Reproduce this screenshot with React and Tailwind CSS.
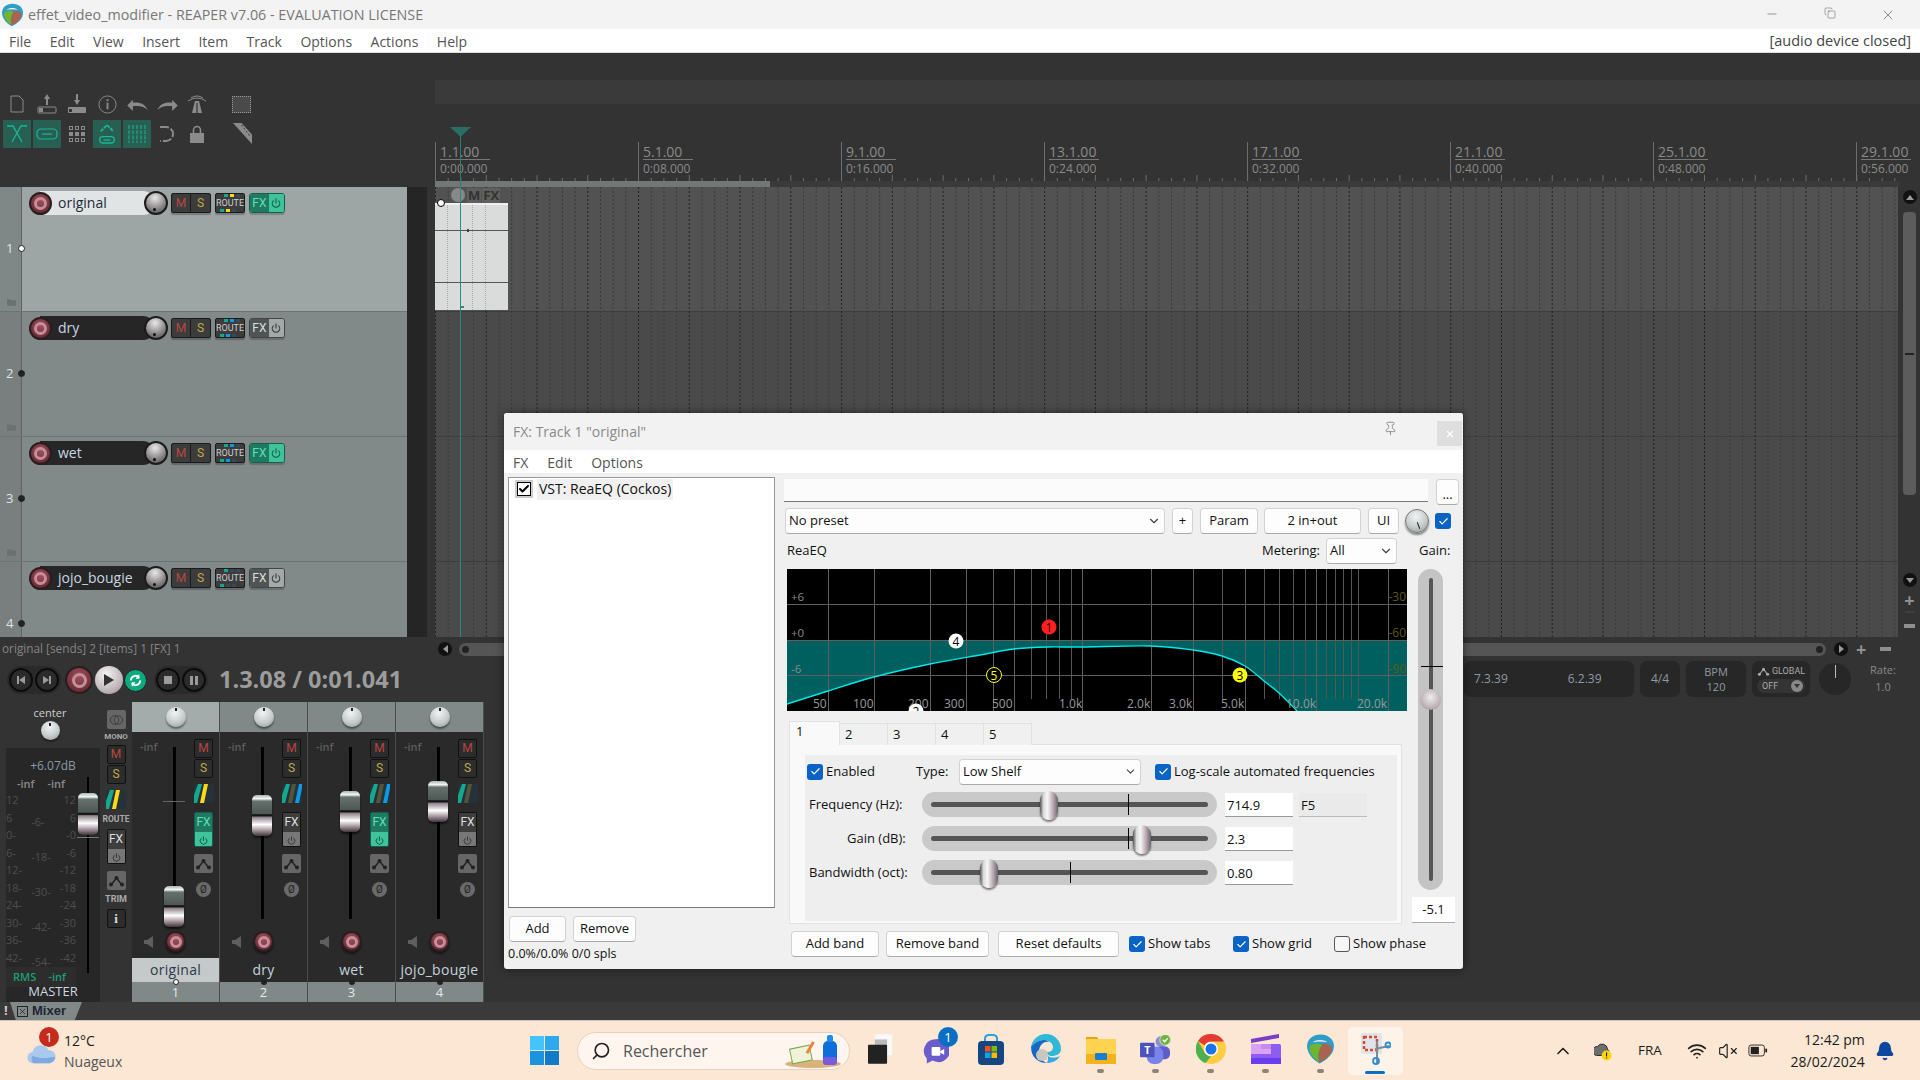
import React from 'react';
import { Minus, Copy, X, Power, Pin, ChevronDown, ChevronUp, Search, Bell, Wifi, VolumeX, Check } from 'lucide-react';

const rec = "rounded-full bg-[radial-gradient(circle_at_50%_35%,#a2505e,#6e2f3b_70%,#3a1a20)] border-2 border-[#2a1c1f] flex items-center justify-center";
const knob = "rounded-full bg-[radial-gradient(circle_at_45%_30%,#f2f4f4,#c5cbcb_55%,#8d9393)] shadow-[0_2px_2px_rgba(0,0,0,0.45)]";
const capV = "bg-[linear-gradient(#aab4b0_0,#f4f7f5_9%,#66716e_15%,#4d5855_46%,#151515_48%,#151515_51%,#8d8288_54%,#ffffff_72%,#b5a6ad_84%,#40353a_100%)]";
const capH = "bg-[linear-gradient(90deg,#555_0,#ddd_20%,#f5f5f5_42%,#bfaeb7_70%,#666_100%)]";

function RecordBtn({ size = 'w-[23px] h-[23px]', inner = 'w-[13px] h-[13px]', className = '' }) {
  return (
    <div className={`${rec} ${size} ${className} shrink-0`}>
      <div className={`${inner} rounded-full border-[3px] border-[#c48f99]`} />
    </div>
  );
}

function Env({ className = 'w-[15px] h-[12px]', color = '#222' }) {
  return (
    <svg viewBox="0 0 15 12" className={className}>
      <polyline points="2,10 7.5,3 13,10" fill="none" stroke={color} strokeWidth="1.5" />
      <circle cx="2" cy="9.5" r="2" fill={color} /><circle cx="7.5" cy="3" r="2" fill={color} /><circle cx="13" cy="9.5" r="2" fill={color} />
    </svg>
  );
}

function Stripes({ colors }) {
  return (
    <svg viewBox="0 0 20 19" className="w-[20px] h-[19px] block">
      <rect width="20" height="19" rx="2" fill="#26323a" />
      <polygon points="0,19 0,11 4,0 8,0 3,19" fill={colors[0]} />
      <polygon points="6,19 10,0 14,0 10,19" fill={colors[1]} />
      <polygon points="13,19 17,0 20,0 20,4 17,19" fill={colors[2]} />
    </svg>
  );
}

function TrackHeader({ num, name, selected, fx, stripe }) {
  return (
    <div className={`h-[125px] shrink-0 flex border-b border-[#6c7473] ${selected ? 'bg-[#9ea5a5]' : 'bg-[#818a89]'}`}>
      <div className={`w-[22px] shrink-0 relative border-r border-[#5d6564] flex items-center text-[13px] text-[#dfe3e3] pl-[6px] ${selected ? 'bg-[#7f8887]' : 'bg-[#787f7e]'}`}>
        {num}
        <div className={`absolute right-[-4px] top-[58px] w-[7px] h-[7px] rounded-full border ${num === 1 ? 'bg-white border-[#222]' : 'bg-[#222] border-[#222]'}`} />
        <svg viewBox="0 0 10 7" className="absolute left-[7px] bottom-[5px] w-[9px] h-[7px]"><path d="M0 0h4l1 1h5v6H0z" fill="#6a7271" /></svg>
      </div>
      <div className="flex items-start pt-[4px] pl-[7px]">
        <RecordBtn className="z-10 mt-[1px]" />
        <div className={`-ml-[12px] w-[115px] h-[24px] rounded-r-full pl-[18px] text-[14px] leading-[23px] ${selected ? 'bg-[#e1e4e4] text-[#1d2b3a]' : 'bg-[#262626] text-[#c9d6e3]'}`}>{name}</div>
        <div className="-ml-[11px] w-[24px] h-[24px] z-10 relative rounded-full border-2 border-[#1c1c1c] bg-[radial-gradient(circle_at_45%_25%,#e8e8e8,#8f8a8d_55%,#454545)]">
          <div className="absolute left-[7px] bottom-[2px] w-[3px] h-[3px] rounded-full bg-[#111]" />
        </div>
        <div className="ml-[3px] mt-[2px] flex h-[20px] rounded-[2px] border border-[#1b1b1b] bg-[#3c3c3c] text-[12px] leading-[18px] font-['Roboto'] shadow-[0_2px_1px_rgba(0,0,0,0.25)]">
          <span className="w-[19px] text-center text-[#b8473f] border-r border-[#1b1b1b]">M</span>
          <span className="w-[19px] text-center text-[#c2a84a]">S</span>
        </div>
        <div className="ml-[4px] mt-[2px] relative w-[30px] h-[20px] rounded-[2px] border border-[#1b1b1b] bg-[#3c3c3c] text-[9px] leading-[18px] text-center font-['Roboto'] text-[#ccc] shadow-[0_2px_1px_rgba(0,0,0,0.25)]">
          ROUTE
          <div className="absolute top-0 left-[8px] flex gap-[2px]"><i className="w-[4px] h-[3px] bg-[#14a88f]" /><i className={`w-[4px] h-[3px] ${stripe}`} /><i className="w-[4px] h-[3px] bg-[#3a4a55]" /></div>
          <div className="absolute bottom-0 left-[4px] flex gap-[2px]"><i className="w-[4px] h-[3px] bg-[#14a88f]" /><i className={`w-[4px] h-[3px] ${stripe}`} /><i className="w-[4px] h-[3px] bg-[#3a4a55]" /></div>
        </div>
        <div className={`ml-[4px] mt-[2px] flex w-[36px] h-[20px] rounded-[3px] border overflow-hidden shadow-[0_2px_1px_rgba(0,0,0,0.2)] ${fx ? 'border-[#14604c]' : 'border-[#444]'}`}>
          <span className={`w-[20px] text-center text-[12px] leading-[18px] font-['Roboto'] ${fx ? 'bg-[#1f7a61] text-[#5be0b5]' : 'bg-[#4f5554] text-[#ddd]'}`}>FX</span>
          <span className={`w-[16px] flex items-center justify-center ${fx ? 'bg-[#3fc39a] text-[#0f5a46]' : 'bg-[#a3a8a8] text-[#333]'}`}><Power size={10} strokeWidth={2.5} /></span>
        </div>
      </div>
    </div>
  );
}

function ToolBtn({ on, children }) {
  return <div className={`w-[28px] h-[28px] mx-[1px] flex items-center justify-center ${on ? 'bg-[#285f53]' : ''}`}>{children}</div>;
}

function Toolbar() {
  const g = '#8b8b8b', t = '#1fb596';
  return (
    <div className="h-[134px] pt-[36px] pl-[2px]">
      <div className="flex h-[30px] items-center">
        <ToolBtn><svg viewBox="0 0 14 18" className="w-[14px] h-[18px]"><path d="M1 1h8l4 4v12H1z" fill="none" stroke={g} /></svg></ToolBtn>
        <ToolBtn><svg viewBox="0 0 20 20" className="w-[20px] h-[20px]"><path d="M10 0l3 5h-2v6H9V5H7z" fill={g} /><rect x="1" y="13" width="18" height="6" rx="1" fill="none" stroke={g} /><rect x="2" y="14" width="4" height="4" fill={g} /></svg></ToolBtn>
        <ToolBtn><svg viewBox="0 0 20 20" className="w-[20px] h-[20px]"><path d="M10 11l3-5h-2V0H9v6H7z" fill={g} /><rect x="1" y="13" width="18" height="6" rx="1" fill={g} /><rect x="2" y="15" width="3" height="3" fill="#333" /></svg></ToolBtn>
        <ToolBtn><svg viewBox="0 0 20 20" className="w-[19px] h-[19px]"><circle cx="10" cy="10" r="9" fill="none" stroke={g} /><rect x="9" y="8" width="2" height="7" fill={g} /><rect x="9" y="4.5" width="2" height="2" fill={g} /></svg></ToolBtn>
        <ToolBtn><svg viewBox="0 0 22 14" className="w-[21px] h-[13px]"><path d="M0 8l6-6v3c7-1 13 1 16 8-4-4-9-5-16-4v5z" fill={g} /></svg></ToolBtn>
        <ToolBtn><svg viewBox="0 0 22 14" className="w-[21px] h-[13px]"><path d="M22 8l-6-6v3C9 4 3 6 0 13c4-4 9-5 16-4v5z" fill={g} /></svg></ToolBtn>
        <ToolBtn><svg viewBox="0 0 20 20" className="w-[20px] h-[20px]"><path d="M8 7h4l3 12H5z" fill={g} /><path d="M1 7q9-6 18 0" fill="none" stroke={g} /><path d="M4 4q6-4 12 0" fill="none" stroke={g} /><rect x="9.4" y="9" width="1.2" height="10" fill="#333" /></svg></ToolBtn>
        <div className="ml-[20px] w-[19px] h-[17px] border border-dotted border-[#999] bg-[#4a4a4a]" />
      </div>
      <div className="flex h-[30px] items-center">
        <ToolBtn on><svg viewBox="0 0 20 20" className="w-[20px] h-[20px]"><path d="M0 2h6l9 16M20 2h-6L5 18" fill="none" stroke={t} strokeWidth="1.3" /></svg></ToolBtn>
        <ToolBtn on><svg viewBox="0 0 22 12" className="w-[22px] h-[12px]"><rect x="1" y="1" width="20" height="10" rx="4" fill="none" stroke={t} strokeWidth="1.2" /><rect x="6" y="5.5" width="10" height="1.2" fill={t} /></svg></ToolBtn>
        <ToolBtn><div className="grid grid-cols-3 gap-[2px]">{Array.from({ length: 9 }).map((_, i) => <i key={i} className={`w-[4px] h-[4px] border border-[#8b8b8b] ${i > 2 && i < 6 ? 'bg-[#8b8b8b]' : ''}`} />)}</div></ToolBtn>
        <ToolBtn on><svg viewBox="0 0 20 24" className="w-[18px] h-[22px]"><path d="M3 9l7-7 7 7" fill="none" stroke={t} strokeWidth="2" strokeDasharray="4 1" /><rect x="2" y="15" width="16" height="7" rx="3" fill="none" stroke={t} strokeWidth="1.4" /><rect x="6" y="18" width="8" height="1.4" fill={t} /></svg></ToolBtn>
        <ToolBtn on><svg viewBox="0 0 18 18" className="w-[18px] h-[18px]">{[1, 5, 9, 13, 17].map(x => <line key={x} x1={x} x2={x} y1="0" y2="18" stroke={t} strokeDasharray="4 1.2" />)}</svg></ToolBtn>
        <ToolBtn><svg viewBox="0 0 16 18" className="w-[16px] h-[18px]"><path d="M1 2h6a7 7 0 0 1 0 14H1" fill="none" stroke={g} strokeWidth="2" strokeDasharray="9 2" /></svg></ToolBtn>
        <ToolBtn><svg viewBox="0 0 14 18" className="w-[14px] h-[18px]"><path d="M3.5 8V5a3.5 3.5 0 0 1 7 0v3" fill="none" stroke={g} strokeWidth="1.6" /><rect x="0" y="8" width="14" height="10" fill={g} /></svg></ToolBtn>
        <div className="ml-[21px] w-[19px] h-[22px]"><svg viewBox="0 0 20 22"><path d="M0 0h9l11 12v10z" fill={g} /><path d="M9 2l9 12" stroke="#333" strokeDasharray="2 2" /></svg></div>
      </div>
    </div>
  );
}

function Ruler() {
  const labels = [['1.1.00', '0:00.000'], ['5.1.00', '0:08.000'], ['9.1.00', '0:16.000'], ['13.1.00', '0:24.000'], ['17.1.00', '0:32.000'], ['21.1.00', '0:40.000'], ['25.1.00', '0:48.000'], ['29.1.00', '0:56.000']];
  return (
    <div className="h-[83px] relative pt-[38px] overflow-hidden">
      <div className="flex text-[#8a8a8a]">
        {labels.map(l => (
          <div key={l[0]} className="w-[203px] shrink-0 h-[39px] border-l border-[#6d6d6d] pl-[4px] pt-[1px]">
            <div className="w-[50px] text-[14px] leading-[17px] border-b border-[#777] h-[17px]">{l[0]}</div>
            <div className="text-[12px] leading-[17px]">{l[1]}</div>
          </div>
        ))}
      </div>
      <div className="absolute left-[0px] bottom-0 h-[6px] w-[335px] bg-[#717876]" />
      <div className="absolute left-[335px] bottom-0 h-[6px] w-[1130px] bg-[#3a3a3a]" />
      <svg className="absolute left-0 bottom-[6px] h-[6px] w-[1465px]">
        {Array.from({ length: 116 }).map((_, i) => <line key={i} x1={i * 12.69 + 0.5} x2={i * 12.69 + 0.5} y1={i % 4 === 0 ? 0 : 3} y2="6" stroke="#6d6d6d" />)}
      </svg>
      <svg viewBox="0 0 21 10" className="absolute left-[15px] top-[23px] w-[21px] h-[10px]"><path d="M0 0h21L10.5 10z" fill="#2a6d64" /></svg>
      <div className="absolute left-[25px] top-[33px] bottom-0 w-[1px] bg-[#2f7d72]" />
    </div>
  );
}

function Arrange() {
  const lines = Array.from({ length: 116 });
  return (
    <div className="relative w-[1463px] h-[450px] overflow-hidden">
      {[true, false, false, false].map((s, i) => <div key={i} className={`h-[125px] border-b border-[#3d3d3d] ${s ? 'bg-[#525252]' : 'bg-[#4a4a4a]'}`} />)}
      <svg className="absolute inset-0 w-[1463px] h-[450px]">
        {lines.map((_, i) => <line key={i} x1={i * 12.69 + 0.5} x2={i * 12.69 + 0.5} y1="0" y2="450" stroke={i % 4 === 0 ? '#222' : '#3a3a3a'} strokeDasharray="2 2" />)}
      </svg>
      <div className="absolute left-0 top-0 flex items-start pl-[16px] pt-[1px] text-[13px] leading-[15px] font-bold text-[#333] gap-[1px]">
        <i className="w-[14px] h-[14px] rounded-full bg-[#888] mr-[1px]" />
        <span className="bg-[#5f5f5f] px-[1px]">M</span><span className="bg-[#5f5f5f] px-[1px]">FX</span>
      </div>
      <div className="absolute left-0 top-[16px] w-[73px] h-[107px] bg-[#d9dcdb] border-t-[2px] border-[#f0f0f0]">
        <div className="absolute left-0 right-0 top-[25px] h-[1px] bg-[#555]" />
        <div className="absolute left-[32px] top-[24px] w-[2px] h-[3px] bg-[#444]" />
        <div className="absolute left-0 right-0 top-[77px] h-[1px] bg-[#555]" />
        {[12, 37, 50].map(x => <div key={x} className="absolute top-0 bottom-0 border-l border-dotted border-[#aaa]" style={{ left: x }} />)}
      </div>
      <div className="absolute left-[2px] top-[12px] w-[8px] h-[8px] rounded-full bg-white border-[1.5px] border-black" />
      <div className="absolute left-[25px] top-0 bottom-0 w-[1px] bg-[#2f8c7f]" />
      <div className="absolute left-[25px] top-[119px] w-[4px] h-[2px] bg-[#2f8c7f]" />
    </div>
  );
}

function VScroll() {
  return (
    <div className="w-[21px] flex flex-col items-center pt-[3px] pl-[2px]">
      <div className="w-[14px] h-[14px] rounded-full bg-[#111] flex items-center justify-center"><div className="w-0 h-0 border-x-[4px] border-x-transparent border-b-[5px] border-b-[#999]" /></div>
      <div className="mt-[8px] w-[13px] h-[283px] rounded-[4px] bg-[#5c5c5c] flex items-center justify-center"><i className="w-[9px] h-[2px] bg-[#222]" /></div>
      <div className="mt-[78px] w-[14px] h-[14px] rounded-full bg-[#111] flex items-center justify-center"><div className="w-0 h-0 border-x-[4px] border-x-transparent border-t-[5px] border-t-[#999]" /></div>
      <div className="mt-[6px] text-[#8f8f8f] text-[18px] leading-[14px] font-bold">+</div>
      <i className="mt-[4px] w-[10px] h-[2px] bg-[#3e3e3e]" />
      <i className="mt-[11px] w-[11px] h-[4px] bg-[#8f8f8f]" />
    </div>
  );
}

function Tri({ d }) {
  return <svg viewBox="0 0 12 12" className="w-[12px] h-[12px]"><path d={d} fill="#9a9a9a" /></svg>;
}

function Transport() {
  const btn = "w-[24px] h-[24px] rounded-full bg-[#2b2b2b] border-2 border-[#0c0c0c] flex items-center justify-center";
  return (
    <div className="flex items-center h-[38px] w-[436px] pl-[7px]">
      <div className="flex gap-[2px] p-[2px] rounded-full bg-[#2a2a2a]">
        <div className={btn}><Tri d="M2 2h2v8H2zM10 2v8L4 6z" /></div>
        <div className={btn}><Tri d="M8 2h2v8H8zM2 2v8l6-4z" /></div>
      </div>
      <div className={`${rec} w-[28px] h-[28px] ml-[4px]`}><i className="w-[15px] h-[15px] rounded-full border-[3px] border-[#c48f99]" /></div>
      <div className="w-[28px] h-[28px] ml-[2px] rounded-full bg-[radial-gradient(circle_at_40%_30%,#f4f4f4,#b9aeb2_70%,#7a6f74)] flex items-center justify-center"><svg viewBox="0 0 12 12" className="w-[12px] h-[12px]"><path d="M1 0l10 6-10 6z" fill="#333" /></svg></div>
      <div className="w-[23px] h-[23px] ml-[1px] rounded-full bg-[#0fa97f] border border-[#222] flex items-center justify-center">
        <svg viewBox="0 0 14 14" className="w-[13px] h-[13px]"><path d="M2 7a5 5 0 0 1 9-3M12 7a5 5 0 0 1-9 3" fill="none" stroke="#fff" strokeWidth="2" /><path d="M11 0v5H7zM3 14V9h4z" fill="#fff" /></svg>
      </div>
      <div className="flex gap-[2px] p-[2px] rounded-full bg-[#2a2a2a] ml-[7px]">
        <div className={btn}><i className="w-[8px] h-[8px] bg-[#9a9a9a]" /></div>
        <div className={btn}><div className="flex gap-[2px]"><i className="w-[3px] h-[9px] bg-[#9a9a9a]" /><i className="w-[3px] h-[9px] bg-[#9a9a9a]" /></div></div>
      </div>
      <div className="ml-[11px] text-[23.5px] font-bold text-[#9c9c9c] font-['Open_Sans'] whitespace-nowrap">1.3.08 / 0:01.041</div>
    </div>
  );
}

function TransportRight() {
  const panel = "h-[36px] rounded-[7px] bg-[#272727] flex items-center justify-center text-[#8e9aa5]";
  return (
    <div className="flex-1 flex items-start pl-[1028px] gap-[6px] text-[12px]">
      <div className={`${panel} w-[170px] justify-start`}>
        <span className="ml-[10px]">7.3.39</span><span className="ml-[60px]">6.2.39</span>
      </div>
      <div className={`${panel} w-[40px]`}>4/4</div>
      <div className={`${panel} w-[60px] flex-col text-[11px] leading-[15px]`}><span>BPM</span><span>120</span></div>
      <div className={`${panel} w-[58px] flex-col text-[#aaa] font-['Roboto'] text-[9px] leading-[13px]`}>
        <div className="flex items-center gap-[2px]"><Env className="w-[13px] h-[9px]" color="#aaa" /><span>GLOBAL</span></div>
        <div className="w-[48px] h-[14px] mt-[1px] rounded-full bg-[#343434] flex items-center justify-between pl-[5px] pr-[2px]"><span>OFF</span><div className="w-[12px] h-[12px] rounded-full bg-[#888] flex items-center justify-center"><i className="w-0 h-0 border-x-[3px] border-x-transparent border-t-[4px] border-t-[#333]" /></div></div>
      </div>
      <div className="ml-[3px] mt-[2px] w-[32px] h-[32px] rounded-full bg-[#272727] relative"><i className="absolute left-[16px] top-[2px] w-[1px] h-[13px] bg-[#bbb]" /></div>
      <div className="ml-[13px] flex flex-col items-center text-[11px] leading-[17px] text-[#8a8a8a]"><span>Rate:</span><span>1.0</span></div>
    </div>
  );
}

function MasterStrip() {
  const left = ['12', '6', '0-', '6-', '12-', '18-', '24-', '30-', '36-', '42-'];
  const right = ['12', '6', '-0', '-6', '-12', '-18', '-24', '-30', '-36', '-42'];
  return (
    <div className="w-[94px] h-[300px] shrink-0 flex flex-col">
      <div className="h-[46px] shrink-0 flex flex-col items-center text-[#cfcfcf] text-[11px] leading-[14px] pt-[4px] pr-[6px]">
        center
        <div className={`${knob} mt-[1px] w-[19px] h-[19px] relative`}><i className="absolute left-[8px] top-[2px] w-[2px] h-[3px] bg-[#222]" /></div>
      </div>
      <div className="h-[254px] bg-[#272727] flex relative">
        <div className="w-[70px] flex flex-col">
          <div className="h-[18px] mt-[9px] text-center text-[12px] leading-[18px] text-[#8b99a6] pl-[24px] whitespace-nowrap w-[70px]">+6.07dB</div>
          <div className="flex justify-between px-[11px] mt-[1px] text-[11px] leading-[16px] font-semibold text-[#8a8a8a]"><span>-inf</span><span>-inf</span></div>
          <div className="h-[175px] flex justify-between text-[11px] text-[#4f4f4f] leading-[17.5px] mt-[-1px]">
            <div className="flex flex-col">{left.map((s, i) => <span key={i}>{s}</span>)}</div>
            <div className="flex flex-col pt-[13px] leading-[35px]">{['-6-', '-18-', '-30-', '-42-', '-54-'].map(s => <span key={s}>{s}</span>)}</div>
            <div className="flex flex-col items-end">{right.map((s, i) => <span key={i}>{s}</span>)}</div>
          </div>
          <div className="mt-auto h-[20px] flex justify-between pl-[7px] pr-[10px] bg-[#2d2d2d] text-[11px] font-semibold leading-[20px] text-[#1e9e78] mb-[15px]"><span>RMS</span><span>-inf</span></div>
        </div>
        <div className="flex-1 relative">
          <div className="absolute left-[11px] top-[29px] h-[196px] w-[2px] bg-black" />
          <div className="absolute left-[1px] top-[89px] w-[22px] h-[1px] bg-[#777]" />
          <div className={`absolute left-[2px] top-[45px] w-[20px] h-[42px] rounded-[5px] ${capV}`} />
        </div>
        <div className="absolute left-0 w-[94px] bottom-[2px] text-center text-[13px] leading-[18px] text-[#cfd8e0]">MASTER</div>
      </div>
    </div>
  );
}

function SideColumn() {
  const box = "w-[19px] rounded-[2px] border border-[#111] bg-[#2c2c2c] text-center text-[12px] font-['Roboto']";
  return (
    <div className="w-[20px] ml-[6px] shrink-0 flex flex-col items-center pt-[8px] text-[#aaa]">
      <div className="w-[19px] h-[19px] rounded-[2px] bg-[#666] flex items-center justify-center"><svg viewBox="0 0 16 10" className="w-[15px] h-[10px]"><circle cx="6" cy="5" r="4.5" fill="none" stroke="#3a3a3a" /><circle cx="10" cy="5" r="4.5" fill="none" stroke="#3a3a3a" /></svg></div>
      <span className="text-[8px] leading-[12px] mt-[2px] font-bold font-['Roboto']">MONO</span>
      <div className={`${box} h-[19px] leading-[17px] text-[#b8473f] mt-[2px]`}>M</div>
      <div className={`${box} h-[19px] leading-[17px] text-[#c2a84a] mt-[1px]`}>S</div>
      <div className="mt-[6px]"><Stripes colors={['#14a88f', '#ffd915', '#26323a']} /></div>
      <span className="text-[8.5px] leading-[12px] mt-[4px] font-bold font-['Roboto']">ROUTE</span>
      <div className="mt-[4px] w-[19px] h-[35px] rounded-[2px] border border-[#111] overflow-hidden">
        <div className="h-[19px] bg-[#3d3d3d] text-center text-[12px] leading-[19px] font-['Roboto'] text-[#ddd]">FX</div>
        <div className="h-[16px] bg-[#777] flex items-center justify-center text-[#333]"><Power size={9} strokeWidth={2.5} /></div>
      </div>
      <div className="mt-[7px] w-[19px] h-[19px] rounded-[2px] bg-[#666] flex items-center justify-center"><Env /></div>
      <span className="text-[9px] leading-[12px] mt-[3px] font-bold font-['Roboto']">TRIM</span>
      <div className="mt-[4px] w-[19px] h-[19px] rounded-[2px] border border-[#111] bg-[#2c2c2c] text-center text-[13px] leading-[17px] font-bold font-['Liberation_Serif'] text-[#ddd]">i</div>
    </div>
  );
}

function Channel({ num, name, selected, fx, capTop, stripes, first }) {
  return (
    <div className="w-[88px] shrink-0 flex flex-col border-r border-[#4d4d4d]">
      <div className={`h-[30px] flex items-center justify-center ${selected ? 'bg-[#a4abab]' : 'bg-[#808988]'}`}>
        <div className={`${knob} w-[20px] h-[20px] relative`}><i className="absolute left-[9px] top-[1px] w-[2px] h-[3px] bg-[#222]" /></div>
      </div>
      <div className="h-[226px] bg-[#2a2a2a] flex">
        <div className="w-[62px] shrink-0 relative">
          <span className="absolute left-[8px] top-[7px] text-[11px] font-semibold text-[#5c5c5c]">-inf</span>
          <div className="absolute left-[41px] top-[15px] h-[172px] w-[3px] bg-black" />
          {first && <div className="absolute left-[31px] top-[69px] w-[22px] h-[1px] bg-[#666]" />}
          <div className={`absolute left-[32px] w-[20px] h-[41px] rounded-[5px] shadow-[0_2px_2px_rgba(0,0,0,0.6)] ${capV}`} style={{ top: capTop }} />
          <svg viewBox="0 0 9 12" className="absolute left-[12px] top-[204px] w-[9px] h-[12px]"><path d="M0 4h3l6-4v12L3 8H0z" fill="#5f5f5f" /></svg>
          <RecordBtn size="w-[21px] h-[21px]" inner="w-[12px] h-[12px]" className="absolute left-[33px] top-[199px] border-0 shadow-[0_2px_2px_rgba(0,0,0,0.5)]" />
        </div>
        <div className="flex-1 flex flex-col pt-[7px] text-center font-['Roboto'] text-[12px]">
          <div className="w-[19px] h-[19px] rounded-[2px] border border-[#111] bg-[#2c2c2c] leading-[17px] text-[#b8473f]">M</div>
          <div className="w-[19px] h-[19px] rounded-[2px] border border-[#111] bg-[#2c2c2c] leading-[17px] text-[#c2a84a] mt-[1px]">S</div>
          <div className="mt-[6px]"><Stripes colors={stripes} /></div>
          <div className={`mt-[9px] w-[19px] h-[35px] rounded-[2px] border overflow-hidden ${fx ? 'border-[#14604c]' : 'border-[#111]'}`}>
            <div className={`h-[19px] leading-[19px] ${fx ? 'bg-[#1f7a61] text-[#5be0b5]' : 'bg-[#3d3d3d] text-[#ddd]'}`}>FX</div>
            <div className={`h-[16px] flex items-center justify-center ${fx ? 'bg-[#3fc39a] text-[#0f5a46]' : 'bg-[#777] text-[#333]'}`}><Power size={9} strokeWidth={2.5} /></div>
          </div>
          <div className="mt-[7px] w-[19px] h-[19px] rounded-[2px] bg-[#666] flex items-center justify-center"><Env /></div>
          <div className="mt-[9px] ml-[2px] w-[15px] h-[15px] rounded-full bg-[#6a6a6a] text-[10px] leading-[15px] text-[#222]">Ø</div>
        </div>
      </div>
      <div className={`h-[24px] text-center text-[14px] leading-[24px] tracking-[0.3px] ${selected ? 'bg-[#c5c9c9] text-[#2a3a4a]' : 'bg-[#2a2a2a] text-[#c4d2de]'}`}>{name}</div>
      <div className="h-[20px] relative bg-[#808988] text-center text-[13px] leading-[20px] text-[#e4e8e8]">
        {num}
        <i className={`absolute left-[41px] -top-[3px] w-[6px] h-[6px] rounded-full ${selected ? 'bg-white border border-[#222]' : 'bg-[#222]'}`} />
      </div>
    </div>
  );
}

// catmull-rom through the measured curve points
function smooth(p) {
  let d = `M${p[0][0]} ${p[0][1]}`;
  for (let i = 0; i < p.length - 1; i++) {
    const a = p[i - 1] || p[i], b = p[i], c = p[i + 1], e = p[i + 2] || c;
    d += ` C${b[0] + (c[0] - a[0]) / 6} ${b[1] + (c[1] - a[1]) / 6} ${c[0] - (e[0] - b[0]) / 6} ${c[1] - (e[1] - b[1]) / 6} ${c[0]} ${c[1]}`;
  }
  return d;
}

function EQGraph() {
  const curve = [[0, 135], [41, 122], [87, 108], [143, 95], [193, 86], [227, 80], [260, 78], [295, 78], [364, 77], [406, 81], [435, 87], [458, 97], [477, 112], [492, 124], [510, 142]];
  const line = smooth(curve);
  const full = [41, 87, 143, 179, 206, 227, 295, 364, 406, 458, 529, 601];
  const short = [244, 259, 272, 284, 435, 477, 492, 506, 518, 539, 548, 556, 564, 571];
  const xl = [[26, '50'], [66, '100'], [121, '200'], [157, '300'], [205, '500'], [272, '1.0k'], [340, '2.0k'], [382, '3.0k'], [434, '5.0k'], [499, '10.0k'], [570, '20.0k']];
  const Marker = ({ x, y, n, fill, ink, stroke }) => (
    <g>
      <circle cx={x} cy={y} r="7.5" fill={fill} stroke={stroke || 'none'} />
      <text x={x} y={y + 4.5} textAnchor="middle" fontSize="12" fill={ink}>{n}</text>
    </g>
  );
  return (
    <svg viewBox="0 0 620 142" className="w-[620px] h-[142px] block bg-black" fontFamily="Open Sans, sans-serif">
      <rect x="0" y="71" width="620" height="71" fill="#006060" />
      <path d={`${line} L0 142 Z`} fill="#000" />
      {full.map(x => <line key={x} x1={x + 0.5} x2={x + 0.5} y1="0" y2="142" stroke="#5f5f5f" />)}
      {short.map(x => <line key={x} x1={x + 0.5} x2={x + 0.5} y1="0" y2="130" stroke="#555" />)}
      {[35, 71, 106].map(y => <line key={y} x1="0" x2="620" y1={y + 0.5} y2={y + 0.5} stroke="#5f5f5f" />)}
      <path d={line} fill="none" stroke="#00e8e8" strokeWidth="1.4" />
      {[['+6', 32], ['+0', 68], ['-6', 104]].map(l => <text key={l[0]} x="4" y={l[1]} fontSize="11.5" fill="#8a8a8a">{l[0]}</text>)}
      {[['-30', 32], ['-60', 68], ['-90', 104]].map(l => <text key={l[0]} x="619" y={l[1]} textAnchor="end" fontSize="12" fill="#5b5b10">{l[0]}</text>)}
      {xl.map(l => <text key={l[1]} x={l[0]} y="139" fontSize="12" fill="#9a9a9a">{l[1]}</text>)}
      <Marker x={262} y={58} n="1" fill="#ff2020" ink="#300" />
      <Marker x={129} y={142} n="2" fill="#fff" ink="#000" />
      <Marker x={453} y={106} n="3" fill="#ffff00" ink="#000" />
      <Marker x={169} y={72} n="4" fill="#fff" ink="#000" />
      <Marker x={207} y={106} n="5" fill="#000" ink="#ffff00" stroke="#ffff00" />
    </svg>
  );
}

function Cb({ on = true }) {
  return (
    <span className={`w-[16px] h-[16px] rounded-[3px] shrink-0 flex items-center justify-center ${on ? 'bg-[#0b63c5]' : 'border border-[#555] bg-[#f6f6f6]'}`}>
      {on && <Check size={11} color="white" strokeWidth={2.5} />}
    </span>
  );
}

function SliderRow({ label, pl = 0, thumb, mark, value, extra }) {
  return (
    <div className="flex items-center h-[25px]">
      <span className="w-[116px] shrink-0 whitespace-nowrap" style={{ paddingLeft: 3 + pl }}>{label}</span>
      <div className="w-[295px] h-[25px] shrink-0 rounded-full bg-[#c9c9c9] relative flex items-center px-[9px]">
        <div className="h-[5px] w-full rounded-full bg-[#555]" />
        <div className="absolute top-[2px] w-[1px] h-[21px] bg-black" style={{ left: mark }} />
        <div className={`absolute -top-[1px] w-[18px] h-[29px] rounded-full shadow-[0_2px_2px_rgba(0,0,0,0.5)] ${capH}`} style={{ left: thumb }} />
      </div>
      <div className="ml-[8px] w-[68px] h-[24px] bg-white border-b border-[#999] pl-[2px] leading-[24px]">{value}</div>
      {extra && <div className="ml-[6px] w-[68px] h-[24px] bg-[#eaeaea] border-b border-[#bbb] pl-[2px] leading-[24px]">{extra}</div>}
    </div>
  );
}

function FxWindow() {
  const base = "h-[26px] flex items-center bg-[#fdfdfd] rounded-[4px] border border-[#d2d2d2] border-b-[#aaa] text-[13px] text-[#111] shrink-0";
  const btn = `${base} justify-center`;
  const sel = `${base} justify-between px-[3px]`;
  const tabs = ['2', '3', '4', '5'];
  return (
    <div className="absolute left-[504px] top-[413px] w-[959px] h-[556px] bg-[#f0f0f0] rounded-[3px] flex flex-col font-['Open_Sans'] text-[13px] text-[#111] shadow-[0_0_8px_rgba(0,0,0,0.5)]">
      <div className="h-[37px] shrink-0 bg-[#f2f2f2] flex items-center pl-[9px] text-[14px] text-[#8a8a8a] relative rounded-t-[3px]">
        FX: Track 1 "original"
        <Pin size={15} color="#777" strokeWidth={1.2} className="absolute left-[879px] top-[8px]" />
        <div className="absolute right-[1px] top-[8px] w-[25px] h-[25px] bg-[#dedede] flex items-center justify-center"><X size={10} color="#fff" strokeWidth={3} /></div>
      </div>
      <div className="h-[23px] shrink-0 bg-white flex items-center pl-[9px] pt-[1px] gap-[19px] text-[14px] text-[#555]"><span>FX</span><span>Edit</span><span>Options</span></div>
      <div className="flex-1 flex pt-[4px] pl-[4px]">
        <div className="w-[267px] shrink-0 flex flex-col">
          <div className="h-[431px] bg-white border border-[#999] border-b-[#777] p-[1px] flex items-start gap-[4px]">
            <span className="w-[18px] h-[18px] bg-[#ccc] flex items-center justify-center ml-[5px] mt-[1px]"><span className="w-[14px] h-[14px] bg-white border border-black flex items-center justify-center"><Check size={12} color="#000" strokeWidth={4} /></span></span>
            <span className="h-[21px] bg-[#f0f0f0] px-[2px] leading-[20px] text-[14px]">VST: ReaEQ (Cockos)</span>
          </div>
          <div className="flex gap-[7px] mt-[8px] ml-[1px]">
            <div className={`${btn} w-[57px]`}>Add</div>
            <div className={`${btn} w-[63px]`}>Remove</div>
          </div>
          <div className="mt-[3px] text-[12.5px] whitespace-nowrap">0.0%/0.0% 0/0 spls</div>
        </div>
        <div className="flex-1 flex flex-col pl-[9px]">
          <div className="flex h-[23px] mt-[2px]">
            <div className="w-[644px] bg-[#fbfbfb] border-b border-[#777]" />
            <div className={`${btn} w-[23px] h-[22px] ml-[8px] items-end text-[11px]`}>...</div>
          </div>
          <div className="flex items-center h-[24px] mt-[7px] ml-[1px]">
            <div className={`${sel} w-[380px] h-[24px]`}>No preset <ChevronDown size={14} color="#444" /></div>
            <div className={`${btn} w-[21px] h-[22px] ml-[7px]`}>+</div>
            <div className={`${btn} w-[58px] h-[22px] ml-[7px]`}>Param</div>
            <div className={`${btn} w-[97px] h-[22px] ml-[6px]`}>2 in+out</div>
            <div className={`${btn} w-[31px] h-[22px] ml-[7px]`}>UI</div>
            <div className={`${knob} w-[24px] h-[24px] ml-[6px] relative border border-[#777]`}><i className="absolute left-[12px] top-[12px] w-[1px] h-[7px] bg-[#222] -rotate-[20deg]" /></div>
            <span className="ml-[6px]"><Cb /></span>
          </div>
          <div className="flex items-center h-[23px] mt-[6px] pl-[3px]">
            <span className="w-[475px]">ReaEQ</span>
            <span className="whitespace-nowrap">Metering:</span>
            <div className={`${sel} absolute left-[822px] w-[71px] h-[23px] rounded-[2px]`}>All <ChevronDown size={14} color="#444" /></div>
            <span className="absolute left-[915px]">Gain:</span>
          </div>
          <div className="flex mt-[7px] pl-[3px] h-[354px] relative">
            <div className="w-[620px]">
              <EQGraph />
              <div className="flex mt-[10px] ml-[2px] items-end h-[24px]">
                <span className="w-[51px] h-[24px] bg-[#f9f9f9] border border-[#e2e2e2] border-b-0 pl-[6px] z-10 leading-[18px]">1</span>
                {tabs.map(t => <span key={t} className="w-[48px] h-[22px] bg-[#f0f0f0] border-t border-r border-[#e2e2e2] pl-[5px] leading-[20px]">{t}</span>)}
              </div>
              <div className="ml-[2px] w-[613px] h-[180px] -mt-[1px] bg-[#f9f9f9] border border-[#e2e2e2] pl-[15px] pt-[10px]">
                <div className="w-[592px] h-[166px] bg-[#eeeeee] pl-[1px]">
                  <div className="flex items-center h-[23px] pt-[5px] box-content pl-[1px]">
                    <Cb /><span className="ml-[3px] w-[90px]">Enabled</span>
                    <span className="w-[43px]">Type:</span>
                    <div className={`${sel} w-[182px] h-[23px] rounded-[2px]`}>Low Shelf <ChevronDown size={13} color="#444" /></div>
                    <span className="ml-[14px]"><Cb /></span><span className="ml-[3px] whitespace-nowrap">Log-scale automated frequencies</span>
                  </div>
                  <div className="flex flex-col gap-[9px] mt-[9px]">
                    <SliderRow label="Frequency (Hz):" thumb={118} mark={206} value="714.9" extra="F5" />
                    <SliderRow label="Gain (dB):" pl={38} thumb={211} mark={206} value="2.3" />
                    <SliderRow label="Bandwidth (oct):" thumb={58} mark={148} value="0.80" />
                  </div>
                </div>
              </div>
            </div>
            <div className="flex-1 relative">
              <div className="absolute left-[11px] top-0 w-[25px] h-[321px] rounded-full bg-[#c4c4c4] flex justify-center py-[9px]"><div className="w-[4px] h-full rounded-full bg-[#555]" /></div>
              <div className="absolute left-[14px] top-[97px] w-[22px] h-[1px] bg-black" />
              <div className="absolute left-[13px] top-[120px] w-[21px] h-[21px] rounded-full bg-[radial-gradient(circle_at_50%_40%,#eee,#b7a9b0_70%,#555)]" />
              <div className="absolute left-[5px] top-[328px] w-[43px] h-[26px] bg-white border-b border-[#aaa] text-center leading-[24px]">-5.1</div>
            </div>
          </div>
          <div className="flex items-center h-[26px] mt-[8px] ml-[7px]">
            <div className={`${btn} w-[88px]`}>Add band</div>
            <div className={`${btn} w-[103px] ml-[7px]`}>Remove band</div>
            <div className={`${btn} w-[121px] ml-[9px]`}>Reset defaults</div>
            <span className="ml-[10px]"><Cb /></span><span className="ml-[3px] w-[85px]">Show tabs</span>
            <Cb /><span className="ml-[3px] w-[82px]">Show grid</span>
            <Cb on={false} /><span className="ml-[3px]">Show phase</span>
          </div>
        </div>
      </div>
    </div>
  );
}

function ReaperLogo({ className }) {
  return (
    <svg viewBox="0 0 28 30" className={className}>
      <path d="M14 0C6 0 0 5 0 12c0 8 7 15 13 18 6-3 15-9 15-18C28 5 22 0 14 0z" fill="#2f9dc6" />
      <path d="M3 12C1 18 8 26 13 29c-3-6-1-13 3-18-5-2-10-2-13 1z" fill="#6fb52e" />
      <path d="M16 10c-4 5-5 13-3 19 6-3 13-8 13-15-2-4-6-6-10-4z" fill="#a9634f" />
      <path d="M6 8c4-3 11-3 15 0-5-1-10-1-15 0z" fill="#f1f1f1" />
    </svg>
  );
}

function TaskIcon({ active, dot, children }) {
  return (
    <div className={`w-[55px] h-[48px] shrink-0 relative flex items-center justify-center pb-[3px] ${active ? 'bg-[#fdf3e9] rounded-[5px]' : ''}`}>
      {children}
      {dot && <i className="absolute bottom-[2px] left-[24px] w-[7px] h-[4px] rounded-full bg-[#8d8378]" />}
      {active && <i className="absolute bottom-[1px] left-[17px] w-[20px] h-[3px] rounded-full bg-[#0a6fc2]" />}
    </div>
  );
}

function Taskbar() {
  return (
    <div className="h-[59px] shrink-0 bg-[#fbe7d3] flex items-center font-['Open_Sans'] text-[#1c1c1c]">
      <div className="w-[530px] shrink-0 flex items-center pl-[26px] relative">
        <svg viewBox="0 0 32 24" className="w-[30px] h-[24px] mt-[5px]"><path d="M8 23a6 6 0 0 1-1-12 9 9 0 0 1 17-2 7 7 0 0 1 1 14z" fill="#a9c9ef" /><path d="M8 23a6 6 0 0 1-1-8c8 4 18 2 24 1a7 7 0 0 1-6 7z" fill="#7fa9e2" /></svg>
        <div className="absolute left-[39px] top-[-3px] w-[20px] h-[20px] rounded-full bg-[#c42b1c] text-white text-[13px] text-center leading-[20px]">1</div>
        <div className="ml-[8px] flex flex-col text-[14px] leading-[21px]"><span>12°C</span><span className="text-[#555]">Nuageux</span></div>
      </div>
      <svg viewBox="0 0 30 30" className="w-[29px] h-[29px] shrink-0">
        <rect width="14.5" height="14.5" fill="#45c4f9" /><rect x="15.5" width="14.5" height="14.5" fill="#2ea8ee" /><rect y="15.5" width="14.5" height="14.5" fill="#1b93de" /><rect x="15.5" y="15.5" width="14.5" height="14.5" fill="#0f7bc9" />
      </svg>
      <div className="ml-[18px] mr-[3px] w-[273px] h-[38px] rounded-full bg-[#fef6ee] border border-[#e6d2bd] flex items-center pl-[13px] shrink-0 relative">
        <Search size={20} color="#222" strokeWidth={2} className="scale-x-[-1]" />
        <span className="ml-[12px] text-[#555] text-[16px]">Rechercher</span>
        <svg viewBox="0 0 56 34" className="absolute right-[8px] top-[2px] w-[56px] h-[34px]">
          <ellipse cx="28" cy="29" rx="28" ry="4" fill="#d9b27c" />
          <rect x="6" y="12" width="20" height="15" fill="#eef3d8" stroke="#7fa35a" transform="rotate(-12 16 20)" />
          <rect x="24" y="6" width="3" height="13" fill="#e8863a" transform="rotate(30 25 12)" />
          <rect x="38" y="6" width="14" height="24" rx="5" fill="#0f6ddc" /><rect x="42" y="0" width="6" height="7" rx="2" fill="#1c8af0" /><rect x="38" y="22" width="14" height="8" rx="3" fill="#7a5be0" />
        </svg>
      </div>
      <TaskIcon><svg viewBox="0 0 30 34" className="w-[26px] h-[30px]"><rect x="8" y="0" width="20" height="24" rx="1" fill="#f8f8f8" /><rect x="8" y="6" width="14" height="18" fill="#bbb" /><rect x="0" y="12" width="22" height="22" rx="1" fill="#222" /></svg></TaskIcon>
      <TaskIcon>
        <svg viewBox="0 0 28 32" className="w-[27px] h-[32px]"><path d="M14 6a12 12 0 0 0-9 20v5l6-3A12 12 0 1 0 14 6z" fill="#6b5ccc" /><rect x="10" y="14" width="9" height="9" rx="1" fill="#fff" /><path d="M19 18l4-2v6l-4-2z" fill="#fff" /></svg>
        <div className="absolute right-[5px] top-[0px] w-[20px] h-[20px] rounded-full bg-[#0a6fc2] text-white text-[13px] text-center leading-[20px]">1</div>
      </TaskIcon>
      <TaskIcon><svg viewBox="0 0 28 32" className="w-[28px] h-[32px]"><path d="M8 9V5a4 4 0 0 1 4-3h4a4 4 0 0 1 4 3v4" fill="none" stroke="#2f9fdc" strokeWidth="2" /><rect x="1" y="8" width="26" height="24" rx="4" fill="#15467f" /><rect x="8" y="13" width="5.5" height="5.5" fill="#f25022" /><rect x="14.5" y="13" width="5.5" height="5.5" fill="#7fba00" /><rect x="8" y="19.5" width="5.5" height="5.5" fill="#00a4ef" /><rect x="14.5" y="19.5" width="5.5" height="5.5" fill="#ffb900" /></svg></TaskIcon>
      <TaskIcon><svg viewBox="0 0 32 32" className="w-[32px] h-[32px]"><path d="M16 1a15 15 0 0 1 15 15c0 5-5 7-9 7s-5-2-5-4c4 0 6-2 6-5 0-4-5-7-9-7C8 7 3 11 1 14 2 7 8 1 16 1z" fill="#2fb9d6" /><path d="M1 14c2-3 7-7 13-7 3 0 4 1 5 2-6-1-10 4-10 10 0 5 3 9 8 11C8 30 1 24 1 14z" fill="#1668c4" /><path d="M17 30c5 0 10-2 13-7-4 2-9 2-12 0 0 2 0 5-1 7z" fill="#36a7e6" /><circle cx="12" cy="22" r="6" fill="#c9c6c0" /></svg></TaskIcon>
      <TaskIcon dot><svg viewBox="0 0 30 30" className="w-[30px] h-[30px]"><path d="M0 3h11l2 3H0z" fill="#e2a414" /><rect y="5" width="30" height="25" rx="1" fill="#ffd34f" /><rect y="20" width="30" height="10" fill="#f4b21c" /><rect x="9" y="19" width="12" height="7" rx="1" fill="#1a7fd1" /></svg></TaskIcon>
      <TaskIcon dot><svg viewBox="0 0 32 30" className="w-[31px] h-[29px]"><circle cx="22" cy="7" r="6" fill="#8b8fd8" /><rect x="17" y="12" width="14" height="13" rx="5" fill="#5b5fc7" /><rect x="7" y="12" width="17" height="18" rx="7" fill="#7b83eb" /><rect x="0" y="8" width="15" height="15" rx="1" fill="#4b53bc" /><text x="7.5" y="20" fontSize="11" fontWeight="700" fill="#fff" textAnchor="middle">T</text><circle cx="26" cy="5" r="5.5" fill="#6bb33a" stroke="#d8d8c8" /><path d="M23.5 5l2 2 3-3.5" stroke="#fff" strokeWidth="1.4" fill="none" /></svg></TaskIcon>
      <TaskIcon dot><svg viewBox="0 0 30 30" className="w-[30px] h-[30px]"><circle cx="15" cy="15" r="15" fill="#ffcd40" /><path d="M15 0a15 15 0 0 1 13 7.500H15a7.500 7.500 0 0 0-6.500 3.750L2 7A15 15 0 0 1 15 0z" fill="#e53935" /><path d="M2 7l6.500 11.250A7.500 7.500 0 0 0 15 22.500L9.500 29A15 15 0 0 1 2 7z" fill="#4caf50" /><circle cx="15" cy="15" r="7" fill="#fff" /><circle cx="15" cy="15" r="5.500" fill="#1a73e8" /></svg></TaskIcon>
      <TaskIcon dot><svg viewBox="0 0 30 30" className="w-[30px] h-[30px]"><path d="M0 5l28-5v4L0 9z" fill="#7a3dc8" /><rect y="10" width="30" height="20" rx="1.500" fill="#8f5cf0" /><rect y="10" width="20" height="10" fill="#d9a2f5" /><rect x="10" y="10" width="10" height="5" fill="#c78af2" /><rect x="0" y="24" width="30" height="6" fill="#6a3df0" /></svg></TaskIcon>
      <TaskIcon dot><ReaperLogo className="w-[27px] h-[30px]" /></TaskIcon>
      <TaskIcon active>
        <svg viewBox="0 0 30 32" className="w-[30px] h-[32px]"><rect x="0" y="0" width="21" height="21" rx="2" fill="#dfe3ea" /><rect x="3" y="4" width="13" height="13" fill="none" stroke="#d84a28" strokeWidth="2.5" strokeDasharray="3 2" /><path d="M16 8l0 22" stroke="#808890" strokeWidth="2" /><path d="M14 16l14-3" stroke="#808890" strokeWidth="2" /><circle cx="15" cy="28" r="3" fill="none" stroke="#2a90d8" strokeWidth="1.800" /><circle cx="27" cy="12" r="2.500" fill="none" stroke="#2a90d8" strokeWidth="1.800" /></svg>
      </TaskIcon>
      <div className="flex-1 flex items-center pl-[150px] relative">
        <ChevronUp size={20} color="#222" />
        <svg viewBox="0 0 20 24" className="ml-[21px] w-[18px] h-[22px]"><path d="M3 17a5 5 0 0 1 1-10 6 6 0 0 1 11 3 4 4 0 0 1-1 7z" fill="#6e6e6e" stroke="#222" /><circle cx="14" cy="17" r="5.500" fill="#ffd400" /><rect x="13.400" y="13.500" width="1.200" height="4.500" fill="#222" /><rect x="13.400" y="19" width="1.200" height="1.200" fill="#222" /></svg>
        <span className="ml-[26px] text-[13.5px]">FRA</span>
        <Wifi size={20} color="#222" className="ml-[25px]" strokeWidth={2} />
        <VolumeX size={20} color="#222" strokeWidth={1.400} className="ml-[11px]" />
        <svg viewBox="0 0 22 14" className="ml-[10px] w-[20px] h-[13px]"><rect x="1" y="1" width="17" height="12" rx="2.500" fill="none" stroke="#222" /><rect x="3" y="3" width="9" height="8" fill="#222" /><rect x="19" y="5" width="2" height="4" fill="#222" /></svg>
        <div className="ml-[19px] flex flex-col items-end text-[14px] leading-[22px] whitespace-nowrap w-[78px]"><span>12:42 pm</span><span>28/02/2024</span></div>
        <Bell size={20} color="#0d47a0" fill="#0d47a0" className="ml-[10px]" />
      </div>
    </div>
  );
}

export default function App() {
  return (
    <div className="w-[1920px] h-[1080px] overflow-hidden flex flex-col relative bg-[#333] font-['Open_Sans']">
      <div className="h-[29px] shrink-0 bg-[#f3f3f3] flex items-center pl-[2px] text-[14.300px] text-[#777]">
        <ReaperLogo className="w-[21px] h-[24px]" />
        <span className="ml-[5px]">effet_video_modifier - REAPER v7.06 - EVALUATION LICENSE</span>
        <div className="ml-auto flex text-[#555] pr-[3px]">
          <span className="w-[58px] flex justify-center"><Minus size={14} strokeWidth={1} /></span>
          <span className="w-[58px] flex justify-center"><Copy size={12} strokeWidth={1} /></span>
          <span className="w-[58px] flex justify-center"><X size={16} strokeWidth={1} /></span>
        </div>
      </div>
      <div className="h-[24px] shrink-0 bg-white border-b border-[#ddd] flex items-center pl-[9px] gap-[18.500px] pt-[1px] text-[14px] text-[#555]">
        {['File', 'Edit', 'View', 'Insert', 'Item', 'Track', 'Options', 'Actions', 'Help'].map(m => <span key={m}>{m}</span>)}
        <span className="ml-auto pr-[9px] text-[14.500px] text-[#444]">[audio device closed]</span>
      </div>
      <div className="flex h-[584px] shrink-0">
        <div className="w-[435px] shrink-0">
          <Toolbar />
          <div className="flex h-[450px]">
            <div className="w-[407px] overflow-hidden">
              <TrackHeader num={1} name="original" selected fx stripe="bg-[#ffd915]" />
              <TrackHeader num={2} name="dry" stripe="bg-[#0a9be8]" />
              <TrackHeader num={3} name="wet" fx stripe="bg-[#0a9be8]" />
              <TrackHeader num={4} name="jojo_bougie" stripe="bg-[#3a4a55]" />
            </div>
            <div className="w-[20px] bg-[#252525]" />
          </div>
        </div>
        <div className="flex-1 flex flex-col min-w-0">
          <div className="h-[27px]" />
          <div className="h-[24px] bg-[#3a3a3a]" />
          <Ruler />
          <div className="flex h-[450px]">
            <Arrange />
            <VScroll />
          </div>
        </div>
      </div>
      <div className="h-[24px] shrink-0 flex items-center">
        <div className="w-[436px] pl-[2px] text-[11.800px] text-[#858585] whitespace-nowrap">original [sends] 2 [items] 1 [FX] 1</div>
        <span className="ml-[2px] w-[14px] h-[14px] rounded-full bg-[#111] flex items-center justify-center"><i className="w-0 h-0 border-y-[4px] border-y-transparent border-r-[5px] border-r-[#999]" /></span>
        <div className="ml-[7px] w-[1367px] h-[13px] rounded-full bg-[#555] flex items-center pl-[3px] pr-[3px] justify-end relative">
          <i className="absolute left-[3px] w-[7px] h-[7px] rounded-full bg-[#222]" />
          <i className="w-[7px] h-[7px] rounded-full bg-[#222]" />
        </div>
        <span className="ml-[8px] w-[14px] h-[14px] rounded-full bg-[#111] flex items-center justify-center"><i className="w-0 h-0 border-y-[4px] border-y-transparent border-l-[5px] border-l-[#999]" /></span>
        <span className="ml-[8px] text-[#8f8f8f] text-[18px] leading-[14px] font-bold">+</span>
        <span className="ml-[14px] w-[11px] h-[4px] bg-[#8f8f8f]" />
      </div>
      <div className="h-[41px] shrink-0 flex">
        <Transport />
        <TransportRight />
      </div>
      <div className="h-[300px] shrink-0 flex pl-[6px]">
        <MasterStrip />
        <SideColumn />
        <div className="w-[6px] shrink-0" />
        <Channel num={1} name="original" selected fx capTop={154} first stripes={['#14a88f', '#ffd915', '#26323a']} />
        <Channel num={2} name="dry" capTop={63} stripes={['#14a88f', '#55553a', '#0a9be8']} />
        <Channel num={3} name="wet" fx capTop={59} stripes={['#14a88f', '#55553a', '#0a9be8']} />
        <Channel num={4} name="jojo_bougie" capTop={49} stripes={['#14a88f', '#55553a', '#26323a']} />
      </div>
      <div className="h-[18px] shrink-0 bg-[#3a3a3a] flex items-center relative">
        <span className="absolute left-[4px] text-[#ccc] text-[13px] font-bold">!</span>
        <div className="ml-[10px] h-[18px] w-[72px] bg-[#808988] flex items-center pl-[7px] [clip-path:polygon(0_0,100%_0,90%_100%,8%_100%)]">
          <span className="w-[11px] h-[11px] border border-[#222] flex items-center justify-center"><X size={9} color="#222" /></span>
          <span className="ml-[4px] text-[13px] font-bold text-[#1c2733] font-['Liberation_Sans']">Mixer</span>
        </div>
      </div>
      <div className="h-[1px] shrink-0 bg-[#cfc3b6]" />
      <Taskbar />
      <FxWindow />
    </div>
  );
}
